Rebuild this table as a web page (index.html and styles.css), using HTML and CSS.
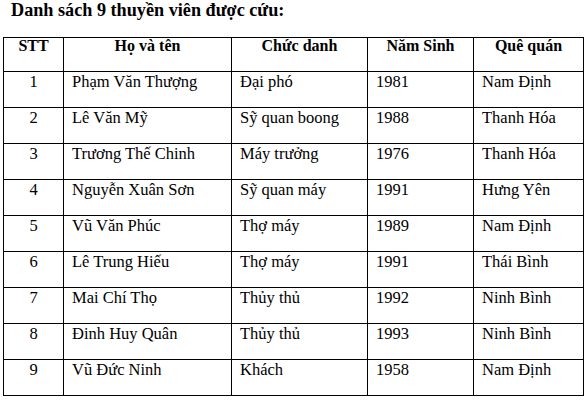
FILE: index.html
```html
<!DOCTYPE html>
<html lang="vi">
<head>
<meta charset="utf-8">
<link rel="stylesheet" href="styles.css">
</head>
<body>
<h1 class="title">Danh sách 9 thuyền viên được cứu:</h1>
<table class="crew">
  <colgroup>
    <col class="c1"><col class="c2"><col class="c3"><col class="c4"><col class="c5">
  </colgroup>
  <thead>
    <tr><th>STT</th><th>Họ và tên</th><th>Chức danh</th><th>Năm Sinh</th><th>Quê quán</th></tr>
  </thead>
  <tbody>
    <tr><td class="num">1</td><td>Phạm Văn Thượng</td><td>Đại phó</td><td>1981</td><td>Nam Định</td></tr>
    <tr><td class="num">2</td><td>Lê Văn Mỹ</td><td>Sỹ quan boong</td><td>1988</td><td>Thanh Hóa</td></tr>
    <tr><td class="num">3</td><td>Trương Thế Chinh</td><td>Máy trưởng</td><td>1976</td><td>Thanh Hóa</td></tr>
    <tr><td class="num">4</td><td>Nguyễn Xuân Sơn</td><td>Sỹ quan máy</td><td>1991</td><td>Hưng Yên</td></tr>
    <tr><td class="num">5</td><td>Vũ Văn Phúc</td><td>Thợ máy</td><td>1989</td><td>Nam Định</td></tr>
    <tr><td class="num">6</td><td>Lê Trung Hiếu</td><td>Thợ máy</td><td>1991</td><td>Thái Bình</td></tr>
    <tr><td class="num">7</td><td>Mai Chí Thọ</td><td>Thủy thủ</td><td>1992</td><td>Ninh Bình</td></tr>
    <tr><td class="num">8</td><td>Đinh Huy Quân</td><td>Thủy thủ</td><td>1993</td><td>Ninh Bình</td></tr>
    <tr><td class="num">9</td><td>Vũ Đức Ninh</td><td>Khách</td><td>1958</td><td>Nam Định</td></tr>
  </tbody>
</table>
</body>
</html>
```
FILE: styles.css
```css
html, body {
  margin: 0;
  padding: 0;
  background: #fff;
  color: #000;
  font-family: "Liberation Serif", "Times New Roman", serif;
}
.title {
  margin: 0;
  padding: 0 0 0 11px;
  font-size: 18.2px;
  line-height: 20px;
  font-weight: bold;
  height: 37px;
  box-sizing: border-box;
}
.crew {
  margin-left: 3px;
  border-collapse: collapse;
  table-layout: fixed;
  width: 580px;
  font-size: 16.5px;
}
.c1 { width: 60px; }
.c2 { width: 168px; }
.c3 { width: 136px; }
.c4 { width: 106px; }
.c5 { width: 110px; }
.crew th, .crew td {
  border: 1px solid #000;
  vertical-align: top;
  padding: 0 8px;
  line-height: 19px;
  text-align: left;
}
.crew th {
  text-align: center;
  height: 34px;
  line-height: 15px;
  box-sizing: border-box;
  font-weight: bold;
  font-size: 16px;
}
.crew td {
  height: 36px;
  box-sizing: border-box;
}
.crew td.num {
  text-align: center;
}
```
